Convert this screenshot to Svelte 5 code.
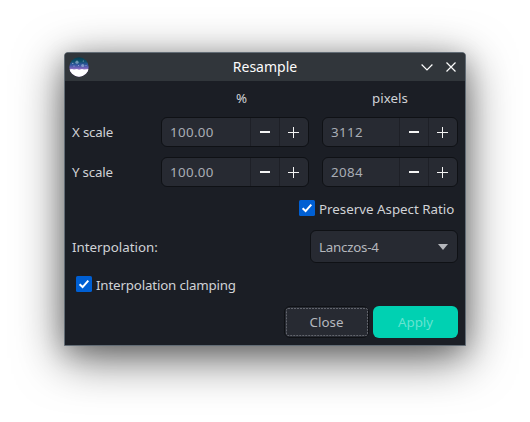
<script>
  const rows = [
    { label: 'X scale', percent: '100.00', pixels: '3112' },
    { label: 'Y scale', percent: '100.00', pixels: '2084' },
  ];
</script>

{#snippet spin(value, kind)}
  <div class="spin {kind}">
    <span class="value">{value}</span>
    <button aria-label="Decrease"><svg width="12" height="12"><path d="M1 5h10v2H1z" fill="#f4f4f4" /></svg></button>
    <button aria-label="Increase"><svg width="12" height="12"><path d="M0 6h11v1H0zM5 1h1v11H5z" fill="#f4f4f4" /></svg></button>
  </div>
{/snippet}

{#snippet check()}
  <svg class="check" width="16" height="16" viewBox="0 0 16 16">
    <rect width="16" height="16" rx="1.6" fill="#005fd3" />
    <path d="M3.6 8.3 6.6 11.1 12.3 4.7" fill="none" stroke="#fff" stroke-width="2" />
  </svg>
{/snippet}

<main>
  <section class="window">
    <header>
      <svg class="logo" width="20" height="20" viewBox="0 0 20 20">
        <defs>
          <linearGradient id="sky" gradientUnits="userSpaceOnUse" x1="0" y1="0" x2="0" y2="13">
            <stop offset="0" stop-color="#023c4c" />
            <stop offset=".35" stop-color="#10506f" />
            <stop offset=".6" stop-color="#3458a0" />
            <stop offset=".8" stop-color="#6660b4" />
            <stop offset="1" stop-color="#a47ccc" />
          </linearGradient>
          <clipPath id="disc"><circle cx="10" cy="10" r="9.7" /></clipPath>
        </defs>
        <g clip-path="url(#disc)">
          <rect width="20" height="20" fill="url(#sky)" />
          <path d="M0 12.6 3 12l2 .6 3-.5 2 .7 3-.7 2 .5 5-.6v8H0z" fill="#fff" />
          <circle cx="8" cy="5.2" r="1.6" fill="#a8c4dc" opacity=".6" />
          <circle cx="13.7" cy="8.6" r="1.5" fill="#a8c4dc" opacity=".6" />
          <g fill="#d5e3f5" opacity=".65">
            <circle cx="14.3" cy="4" r=".6" /><circle cx="3.8" cy="6.4" r=".6" />
            <circle cx="9.5" cy="8.6" r=".5" /><circle cx="5" cy="9" r=".6" /><circle cx="17" cy="8.6" r=".5" />
          </g>
        </g>
      </svg>
      <h1>Resample</h1>
      <div class="controls">
        <svg width="12" height="12" viewBox="0 0 12 12"><path d="M.6 3.5 6 8.9l5.4-5.4" /></svg>
        <svg width="12" height="12" viewBox="0 0 12 12"><path d="m1.5 1.5 9 9m0-9-9 9" /></svg>
      </div>
    </header>
    <div class="body">
      <div class="row heads">
        <span class="label"></span><span class="head percent">%</span><span class="head pixels">pixels</span>
      </div>
      {#each rows as row}
        <div class="row">
          <span class="label">{row.label}</span>
          {@render spin(row.percent, 'percent')}
          {@render spin(row.pixels, 'pixels')}
        </div>
      {/each}
      <div class="option aspect">{@render check()}<span>Preserve Aspect Ratio</span></div>
      <div class="interp">
        <span class="interp-label">Interpolation:</span>
        <div class="combo"><span>Lanczos-4</span><svg width="10" height="6"><path d="M0 0h10L5 6z" fill="#b5b7bc" /></svg></div>
      </div>
      <div class="option clamp">{@render check()}<span>Interpolation clamping</span></div>
      <footer>
        <button class="close">
          <svg class="focus" width="82" height="28"><rect x=".5" y=".5" width="81" height="27" rx="1.5" /></svg>
          <span>Close</span>
        </button>
        <button class="apply">Apply</button>
      </footer>
    </div>
  </section>
</main>

<style>
  :global(body) { background: #fff; }
  main {
    width: 530px; height: 422px; box-sizing: border-box; padding: 52px 64px;
    overflow: hidden; background: #fff; color: #d0d2d6;
    font: 13.33px/18px "Noto Sans", sans-serif;
  }
  .window {
    box-sizing: border-box; width: 402px; height: 294px; border: 1px solid #626c75;
    border-radius: 4px 4px 0 0; background: #1b1e25; overflow: hidden;
    box-shadow: 0 12px 48px rgba(0, 0, 0, .6), 0 6px 24px rgba(0, 0, 0, .2);
  }
  header { height: 28px; display: flex; align-items: center; background: #31363b; padding: 0 8px 0 4px; }
  h1 { flex: 1; margin: 0; padding: 0 0 0 20px; text-align: center; font-size: 14px; line-height: 20px; font-weight: 400; color: #fcfcfc; }
  .controls { display: flex; gap: 12px; }
  .controls path { fill: none; stroke: #fcfcfc; stroke-width: 1.2; }
  .body { padding: 0 7px; }
  .row { display: flex; height: 30px; margin-bottom: 10px; align-items: center; }
  .heads { height: 36px; margin: 0; }
  .label { width: 89px; }
  .percent { width: 148px; margin-right: 13px; }
  .pixels { width: 136px; }
  .head { text-align: center; padding-bottom: 3px; }
  .head.percent { box-sizing: border-box; padding-left: 13px; }
  button { font: inherit; border: 0; padding: 0; margin: 0; color: inherit; }
  .spin, .combo {
    box-sizing: border-box; display: flex; align-items: center; background: #272a32;
    border: 1px solid #0f1115; border-radius: 6px; color: #a9adb5;
  }
  .spin { height: 30px; overflow: hidden; }
  .value { flex: 1; padding-left: 8px; letter-spacing: .35px; }
  .spin button { width: 29px; height: 28px; box-sizing: border-box; border-left: 1px solid #1e2027; background: none; display: flex; align-items: center; justify-content: center; }
  .row .label { letter-spacing: -.2px; }
  .option { display: flex; gap: 4px; align-items: flex-start; height: 20px; }
  .aspect { margin: 13px 0 0 227px; }
  .interp { display: flex; justify-content: space-between; align-items: center; margin-top: 10px; height: 33px; }
  .combo { width: 148px; height: 33px; padding: 0 9px 0 8px; justify-content: space-between; color: #b5b8be; letter-spacing: -.22px; }
  .clamp { margin: 13px 0 0 4px; letter-spacing: -.17px; }
  footer { display: flex; justify-content: flex-end; gap: 4px; margin-top: 10px; }
  .close, .apply { width: 85px; height: 32px; border-radius: 6px; box-sizing: border-box; }
  .close { position: relative; background: #272a32; border: 1px solid #0f1115; color: #b5b8be; }
  .focus { position: absolute; left: 1px; top: 1px; }
  .focus rect { fill: none; stroke: #62656d; stroke-width: 1; stroke-dasharray: 2 1; }
  .apply { background: #00d1b2; color: #66e3d1; }
</style>
